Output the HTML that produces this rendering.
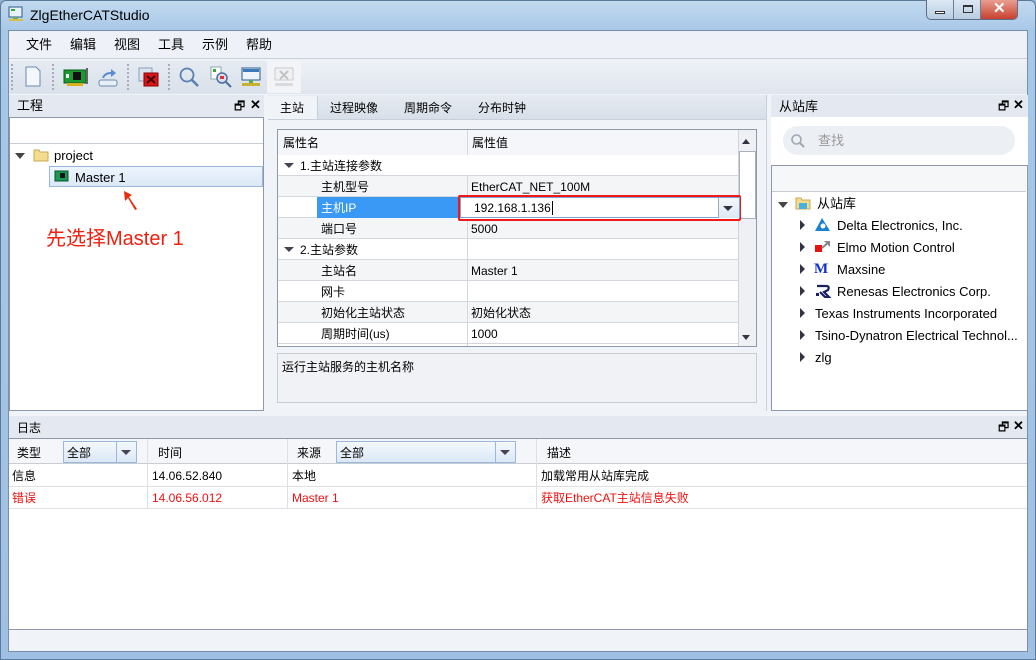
<!DOCTYPE html>
<html><head><meta charset="utf-8"><style>
*{box-sizing:border-box;margin:0;padding:0}
body{width:1036px;height:660px;overflow:hidden;position:relative;font-family:"Liberation Sans","Noto Sans CJK SC",sans-serif;font-size:12px;line-height:14px;color:#000;background:#8fb3d8}
.a{position:absolute}
.t{white-space:nowrap}
</style></head><body>
<div class="a" style="left:0;top:0;width:1036px;height:660px;background:linear-gradient(180deg,#c2d9ef 0,#a8c8e8 30px,#9fc0e2 100%);border:1px solid #5a7a9a;border-radius:6px 6px 0 0"></div>
<svg class="a" style="left:8px;top:6px" width="16" height="16"><rect x="1" y="1" width="13" height="10" fill="#e8f0f8" stroke="#2a5a8a"/><rect x="3" y="3" width="4" height="2" fill="#3a3"/><rect x="5" y="11" width="5" height="2" fill="#6a6"/><rect x="1" y="13" width="14" height="2" fill="#d8c040"/></svg>
<div class="a t" style="left:30px;top:7px;font-size:14px;line-height:16px;color:#000">ZlgEtherCATStudio</div>
<div class="a" style="left:926px;top:0;width:92px;height:20px;border:1px solid #5a6f88;border-top:none;border-radius:0 0 5px 5px;background:linear-gradient(#dde8f4,#b8cce2);overflow:hidden">
<div class="a" style="left:0;top:0;width:27px;height:19px;border-right:1px solid #6a7f98"></div>
<div class="a" style="left:8px;top:11px;width:10px;height:3px;border:1px solid #333;background:#fff"></div>
<div class="a" style="left:27px;top:0;width:27px;height:19px;border-right:1px solid #6a7f98"></div>
<div class="a" style="left:36px;top:5px;width:10px;height:8px;border:1px solid #333;border-top-width:2px"></div>
<div class="a" style="left:54px;top:0;width:38px;height:19px;background:linear-gradient(#e8a090,#c84030)"></div>
<div class="a t" style="left:66px;top:1px;color:#fff;font-size:15px;line-height:16px;font-weight:bold">✕</div>
</div>
<div class="a" style="left:8px;top:30px;width:1020px;height:622px;background:#f0f3f8;border:1px solid #7a8ea8"></div>
<div class="a" style="left:9px;top:31px;width:1018px;height:28px;background:#eef2f8;border-bottom:1px solid #c8d0dc"></div>
<div class="a t" style="left:26px;top:38px;font-size:13px">文件</div>
<div class="a t" style="left:70px;top:38px;font-size:13px">编辑</div>
<div class="a t" style="left:114px;top:38px;font-size:13px">视图</div>
<div class="a t" style="left:158px;top:38px;font-size:13px">工具</div>
<div class="a t" style="left:202px;top:38px;font-size:13px">示例</div>
<div class="a t" style="left:246px;top:38px;font-size:13px">帮助</div>
<div class="a" style="left:9px;top:60px;width:1018px;height:34px;background:linear-gradient(#eef2f7,#dfe5ee)"></div>
<div class="a" style="left:10px;top:61px;width:290px;height:32px;background:linear-gradient(#e6ebf2,#dae1ea)"></div>
<div class="a" style="left:11px;top:64px;width:2px;height:26px;border-left:2px dotted #aab"></div>
<div class="a" style="left:52px;top:64px;width:2px;height:26px;border-left:2px dotted #aab"></div>
<div class="a" style="left:127px;top:64px;width:2px;height:26px;border-left:2px dotted #aab"></div>
<div class="a" style="left:168px;top:64px;width:2px;height:26px;border-left:2px dotted #aab"></div>
<svg class="a" style="left:24px;top:66px" width="18" height="22"><path d="M2 1H12L16 5V20H2Z" fill="#f4f8fc" stroke="#6a8ab0"/></svg>
<svg class="a" style="left:63px;top:66px" width="26" height="22"><rect x="1" y="4" width="22" height="13" fill="#1a9a30" stroke="#0a5a18"/><rect x="10" y="6" width="8" height="8" fill="#111"/><rect x="3" y="8" width="3" height="4" fill="#eee"/><rect x="4" y="17" width="16" height="3" fill="#d8b020"/><rect x="23" y="2" width="2" height="16" fill="#666"/></svg>
<svg class="a" style="left:97px;top:66px" width="22" height="22"><path d="M5 12 Q7 6 14 6 V3 L19 7 L14 11 V8 Q9 8 7 12" fill="#5a8ad0"/><rect x="2" y="14" width="18" height="6" rx="2" fill="#e8eef6" stroke="#6a8ab0"/></svg>
<svg class="a" style="left:138px;top:66px" width="22" height="22"><rect x="1" y="2" width="13" height="13" fill="#d8e4f0" stroke="#8aa0c0"/><rect x="6" y="7" width="14" height="13" fill="#d81818" stroke="#800"/><path d="M9 10L17 17M17 10L9 17" stroke="#400" stroke-width="2"/></svg>
<svg class="a" style="left:178px;top:66px" width="22" height="22"><circle cx="9" cy="9" r="6.5" fill="none" stroke="#5a80b0" stroke-width="1.8"/><path d="M14 14L20 20" stroke="#5a80b0" stroke-width="2.5"/></svg>
<svg class="a" style="left:210px;top:66px" width="22" height="22"><rect x="1" y="1" width="10" height="12" fill="#fff" stroke="#8aa"/><rect x="3" y="3" width="3" height="3" fill="#3a3"/><circle cx="12" cy="12" r="5" fill="#dde" stroke="#4a70a0" stroke-width="1.5"/><rect x="10" y="10" width="4" height="3" fill="#d33"/><path d="M16 16L21 21" stroke="#4a70a0" stroke-width="2"/></svg>
<svg class="a" style="left:240px;top:66px" width="22" height="22"><rect x="2" y="2" width="18" height="12" fill="#eef4fa" stroke="#2a5a8a"/><rect x="3" y="3" width="16" height="3" fill="#3a7ab8"/><rect x="9" y="14" width="4" height="3" fill="#5a5"/><rect x="2" y="17" width="18" height="3" fill="#c8b030"/></svg>
<div class="a" style="left:267px;top:61px;width:34px;height:32px;background:#f2f4f7"></div>
<svg class="a" style="left:273px;top:66px" width="22" height="22" opacity=".45"><rect x="2" y="2" width="18" height="12" fill="#eee" stroke="#999"/><path d="M7 5L15 13M15 5L7 13" stroke="#888" stroke-width="2"/><rect x="2" y="17" width="18" height="3" fill="#bbb"/></svg>

<div class="a" style="left:9px;top:95px;width:255px;height:22px;background:#e4e9f1"></div>
<div class="a t" style="left:17px;top:99px;font-size:13px">工程</div>
<div class="a t" style="left:234px;top:99px;font-size:12px">🗗</div>
<div class="a t" style="left:250px;top:98px;font-size:13px;font-weight:bold">✕</div>
<div class="a" style="left:9px;top:117px;width:255px;height:294px;background:#fff;border:1px solid #8d99a8"></div>
<div class="a" style="left:10px;top:118px;width:253px;height:26px;border-bottom:1px solid #c8cdd4"></div>
<div class="a" style="left:15px;top:153px;border-left:5px solid transparent;border-right:5px solid transparent;border-top:6px solid #444"></div>
<svg class="a" style="left:33px;top:148px" width="16" height="14"><path d="M1 2H6L7 4H15V13H1Z" fill="#f3dc8e" stroke="#c8a850"/></svg>
<div class="a t" style="left:54px;top:149px;font-size:13px">project</div>
<div class="a" style="left:49px;top:166px;width:214px;height:21px;background:linear-gradient(#eef5fd,#dbe8f7);border:1px solid #99b8dc"></div>
<svg class="a" style="left:54px;top:170px" width="16" height="13"><rect x="1" y="1" width="13" height="10" fill="#1a9a50" stroke="#0a5030"/><rect x="6" y="3" width="5" height="5" fill="#112"/></svg>
<div class="a t" style="left:75px;top:171px;font-size:13px">Master 1</div>
<svg class="a" style="left:122px;top:189px" width="20" height="24"><path d="M2 2L10 6L7 8L15 20L13 21L6 9L3 12Z" fill="#e82a10"/></svg>
<div class="a t" style="left:46px;top:227px;font-size:20px;line-height:24px;color:#f02010">先选择Master 1</div>

<div class="a" style="left:268px;top:95px;width:498px;height:24px;background:linear-gradient(#e6ebf2,#d8dfe8)"></div>
<div class="a" style="left:268px;top:96px;width:50px;height:24px;background:#f0f3f8;border-right:1px solid #c8d0dc"></div>
<div class="a t" style="left:280px;top:101px">主站</div>
<div class="a t" style="left:330px;top:101px">过程映像</div>
<div class="a t" style="left:404px;top:101px">周期命令</div>
<div class="a t" style="left:478px;top:101px">分布时钟</div>
<div class="a" style="left:268px;top:119px;width:498px;height:1px;background:#c8d0dc"></div>
<div class="a" style="left:277px;top:129px;width:480px;height:218px;background:#fff;border:1px solid #8d99a8;overflow:hidden">
 <div class="a" style="left:0;top:0;width:460px;height:26px;background:#f4f6f9;border-bottom:1px solid #c8cdd4"></div>
 <div class="a" style="left:189px;top:0;width:1px;height:218px;background:#d4d8de"></div>
 <div class="a t" style="left:5px;top:6px">属性名</div>
 <div class="a t" style="left:194px;top:6px">属性值</div>
</div>
<div class="a" style="left:278px;top:155px;width:460px;height:191px">
 <div class="a" style="left:0;top:0;width:460px;height:21px;background:#fff;border-bottom:1px solid #d4d8de"></div>
 <div class="a" style="left:6px;top:8px;border-left:5px solid transparent;border-right:5px solid transparent;border-top:5px solid #445"></div>
 <div class="a t" style="left:22px;top:4px">1.主站连接参数</div>
 <div class="a" style="left:0;top:21px;width:460px;height:21px;background:#f4f5f7;border-bottom:1px solid #d4d8de"></div>
 <div class="a t" style="left:43px;top:25px">主机型号</div><div class="a t" style="left:193px;top:25px">EtherCAT_NET_100M</div>
 <div class="a" style="left:0;top:42px;width:460px;height:21px;background:#fff;border-bottom:1px solid #d4d8de"></div>
 <div class="a" style="left:39px;top:42px;width:142px;height:21px;background:#3a99f4"></div>
 <div class="a t" style="left:43px;top:46px;color:#fff">主机IP</div>
 <div class="a" style="left:0;top:63px;width:460px;height:21px;background:#f4f5f7;border-bottom:1px solid #d4d8de"></div>
 <div class="a t" style="left:43px;top:67px">端口号</div><div class="a t" style="left:193px;top:67px">5000</div>
 <div class="a" style="left:0;top:84px;width:460px;height:21px;background:#fff;border-bottom:1px solid #d4d8de"></div>
 <div class="a" style="left:6px;top:92px;border-left:5px solid transparent;border-right:5px solid transparent;border-top:5px solid #445"></div>
 <div class="a t" style="left:22px;top:88px">2.主站参数</div>
 <div class="a" style="left:0;top:105px;width:460px;height:21px;background:#f4f5f7;border-bottom:1px solid #d4d8de"></div>
 <div class="a t" style="left:43px;top:109px">主站名</div><div class="a t" style="left:193px;top:109px">Master 1</div>
 <div class="a" style="left:0;top:126px;width:460px;height:21px;background:#fff;border-bottom:1px solid #d4d8de"></div>
 <div class="a t" style="left:43px;top:130px">网卡</div>
 <div class="a" style="left:0;top:147px;width:460px;height:21px;background:#f4f5f7;border-bottom:1px solid #d4d8de"></div>
 <div class="a t" style="left:43px;top:151px">初始化主站状态</div><div class="a t" style="left:193px;top:151px">初始化状态</div>
 <div class="a" style="left:0;top:168px;width:460px;height:21px;background:#fff;border-bottom:1px solid #d4d8de"></div>
 <div class="a t" style="left:43px;top:172px">周期时间(us)</div><div class="a t" style="left:193px;top:172px">1000</div>
 <div class="a" style="left:189px;top:21px;width:1px;height:170px;background:#d4d8de"></div>
</div>
<div class="a" style="left:738px;top:130px;width:18px;height:216px;background:#eef0f3;border-left:1px solid #d0d4da"></div>
<div class="a" style="left:742px;top:139px;border-left:4px solid transparent;border-right:4px solid transparent;border-bottom:5px solid #334"></div>
<div class="a" style="left:739px;top:151px;width:17px;height:68px;background:#fff;border:1px solid #a8b0bc"></div>
<div class="a" style="left:742px;top:335px;border-left:4px solid transparent;border-right:4px solid transparent;border-top:5px solid #334"></div>
<div class="a" style="left:458px;top:195px;width:283px;height:26px;border:2px solid #f01818;border-radius:2px;background:#fff"></div>
<div class="a" style="left:460px;top:197px;width:280px;height:21px;border:1px solid #7da2ce;background:#fff"></div>
<div class="a t" style="left:474px;top:201px">192.168.1.136<span style="border-left:1px solid #000;margin-left:1px"></span></div>
<div class="a" style="left:718px;top:198px;width:21px;height:20px;background:linear-gradient(#f4f8fc,#dde8f4);border-left:1px solid #9ab"></div>
<div class="a" style="left:723px;top:206px;border-left:5px solid transparent;border-right:5px solid transparent;border-top:5px solid #334"></div>
<div class="a" style="left:277px;top:353px;width:480px;height:50px;background:#f0f2f5;border:1px solid #c8cdd4"></div>
<div class="a t" style="left:282px;top:360px">运行主站服务的主机名称</div>
<div class="a" style="left:766px;top:95px;width:1px;height:316px;background:#c8d0dc"></div>

<div class="a" style="left:771px;top:95px;width:257px;height:22px;background:#e4e9f1"></div>
<div class="a t" style="left:779px;top:100px;font-size:13px">从站库</div>
<div class="a t" style="left:998px;top:99px;font-size:12px">🗗</div>
<div class="a t" style="left:1013px;top:98px;font-size:13px;font-weight:bold">✕</div>
<div class="a" style="left:771px;top:117px;width:257px;height:48px;background:#fff"></div>
<div class="a" style="left:783px;top:126px;width:232px;height:29px;border-radius:15px;background:#eceff3"></div>
<svg class="a" style="left:790px;top:133px" width="16" height="16"><circle cx="6.5" cy="6.5" r="4.5" fill="none" stroke="#a0a8b4" stroke-width="1.6"/><path d="M10 10L14 14" stroke="#a0a8b4" stroke-width="2"/></svg>
<div class="a t" style="left:818px;top:134px;color:#999;font-size:13px">查找</div>
<div class="a" style="left:771px;top:165px;width:257px;height:246px;background:#fff;border:1px solid #8d99a8"></div>
<div class="a" style="left:772px;top:166px;width:254px;height:26px;background:#f6f7f9;border-bottom:1px solid #c8cdd4"></div>
<div class="a" style="left:778px;top:202px;border-left:5px solid transparent;border-right:5px solid transparent;border-top:6px solid #444"></div>
<svg class="a" style="left:795px;top:196px" width="16" height="14"><path d="M1 2H6L7 4H15V13H1Z" fill="#f3dc8e" stroke="#c8a850"/><rect x="4" y="7" width="8" height="6" fill="#4ab0e0"/></svg>
<div class="a t" style="left:817px;top:197px;font-size:13px">从站库</div>
<div class="a" style="left:800px;top:220px;border-top:5px solid transparent;border-bottom:5px solid transparent;border-left:5px solid #334"></div>
<div class="a" style="left:800px;top:242px;border-top:5px solid transparent;border-bottom:5px solid transparent;border-left:5px solid #334"></div>
<div class="a" style="left:800px;top:264px;border-top:5px solid transparent;border-bottom:5px solid transparent;border-left:5px solid #334"></div>
<div class="a" style="left:800px;top:286px;border-top:5px solid transparent;border-bottom:5px solid transparent;border-left:5px solid #334"></div>
<div class="a" style="left:800px;top:308px;border-top:5px solid transparent;border-bottom:5px solid transparent;border-left:5px solid #334"></div>
<div class="a" style="left:800px;top:330px;border-top:5px solid transparent;border-bottom:5px solid transparent;border-left:5px solid #334"></div>
<div class="a" style="left:800px;top:352px;border-top:5px solid transparent;border-bottom:5px solid transparent;border-left:5px solid #334"></div>
<svg class="a" style="left:814px;top:217px" width="17" height="15"><path d="M8 1L16 14H1Z" fill="#1a80d0"/><circle cx="9" cy="9" r="2.5" fill="#fff"/></svg>
<svg class="a" style="left:814px;top:240px" width="17" height="14"><rect x="1" y="5" width="7" height="7" fill="#e81010"/><path d="M10 1H16V7" fill="#888"/><path d="M8 8L15 2" stroke="#888" stroke-width="2"/></svg>
<div class="a t" style="left:814px;top:261px;font-weight:bold;color:#1030d0;font-family:'Liberation Serif',serif;font-size:15px;line-height:16px">M</div>
<svg class="a" style="left:814px;top:283px" width="17" height="15"><path d="M3 3H12Q16 3 14 7L10 9L15 14H11L6 9" fill="none" stroke="#1a2060" stroke-width="2.2"/><rect x="2" y="10" width="3" height="3" fill="#1a2060"/></svg>
<div class="a t" style="left:837px;top:218px;font-size:13px;line-height:16px">Delta Electronics, Inc.</div>
<div class="a t" style="left:837px;top:240px;font-size:13px;line-height:16px">Elmo Motion Control</div>
<div class="a t" style="left:837px;top:262px;font-size:13px;line-height:16px">Maxsine</div>
<div class="a t" style="left:837px;top:284px;font-size:13px;line-height:16px">Renesas Electronics Corp.</div>
<div class="a t" style="left:815px;top:306px;font-size:13px;line-height:16px">Texas Instruments Incorporated</div>
<div class="a t" style="left:815px;top:328px;font-size:13px;line-height:16px">Tsino-Dynatron Electrical Technol...</div>
<div class="a t" style="left:815px;top:350px;font-size:13px;line-height:16px">zlg</div>

<div class="a" style="left:9px;top:416px;width:1018px;height:22px;background:#e4e9f1"></div>
<div class="a t" style="left:17px;top:421px">日志</div>
<div class="a t" style="left:998px;top:420px;font-size:12px">🗗</div>
<div class="a t" style="left:1013px;top:419px;font-size:13px;font-weight:bold">✕</div>
<div class="a" style="left:9px;top:438px;width:1018px;height:192px;background:#fff;border-top:1px solid #8d99a8;border-bottom:1px solid #8d99a8"></div>
<div class="a" style="left:9px;top:439px;width:1018px;height:25px;background:#f4f6f9;border-bottom:1px solid #c8cdd4"></div>
<div class="a" style="left:9px;top:486px;width:1018px;height:1px;background:#dde0e4"></div>
<div class="a" style="left:9px;top:508px;width:1018px;height:1px;background:#dde0e4"></div>
<div class="a" style="left:147px;top:439px;width:1px;height:69px;background:#dde0e4"></div>
<div class="a" style="left:287px;top:439px;width:1px;height:69px;background:#dde0e4"></div>
<div class="a" style="left:536px;top:439px;width:1px;height:69px;background:#dde0e4"></div>
<div class="a t" style="left:17px;top:446px">类型</div>
<div class="a" style="left:63px;top:441px;width:74px;height:22px;background:linear-gradient(#f4f8fd,#dbe8f7);border:1px solid #9ab8dc"></div>
<div class="a t" style="left:67px;top:446px">全部</div>
<div class="a" style="left:116px;top:442px;width:1px;height:20px;background:#9ab8dc"></div>
<div class="a" style="left:121px;top:450px;border-left:5px solid transparent;border-right:5px solid transparent;border-top:5px solid #445"></div>
<div class="a t" style="left:158px;top:446px">时间</div>
<div class="a t" style="left:297px;top:446px">来源</div>
<div class="a" style="left:336px;top:441px;width:180px;height:22px;background:linear-gradient(#f4f8fd,#dbe8f7);border:1px solid #9ab8dc"></div>
<div class="a t" style="left:340px;top:446px">全部</div>
<div class="a" style="left:495px;top:442px;width:1px;height:20px;background:#9ab8dc"></div>
<div class="a" style="left:500px;top:450px;border-left:5px solid transparent;border-right:5px solid transparent;border-top:5px solid #445"></div>
<div class="a t" style="left:547px;top:446px">描述</div>
<div class="a t" style="left:12px;top:469px">信息</div>
<div class="a t" style="left:152px;top:469px">14.06.52.840</div>
<div class="a t" style="left:292px;top:469px">本地</div>
<div class="a t" style="left:541px;top:469px">加载常用从站库完成</div>
<div class="a t" style="left:12px;top:491px;color:#f01010">错误</div>
<div class="a t" style="left:152px;top:491px;color:#f01010">14.06.56.012</div>
<div class="a t" style="left:292px;top:491px;color:#f01010">Master 1</div>
<div class="a t" style="left:541px;top:491px;color:#f01010">获取EtherCAT主站信息失败</div>
</body></html>
